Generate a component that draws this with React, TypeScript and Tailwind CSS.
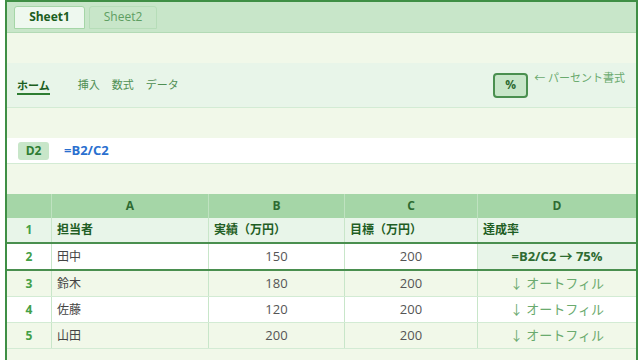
import React from "react";

const rows = [
  { n: "2", name: "田中", b: "150", c: "200", d: "=B2/C2 → 75%", active: true },
  { n: "3", name: "鈴木", b: "180", c: "200", d: "↓ オートフィル" },
  { n: "4", name: "佐藤", b: "120", c: "200", d: "↓ オートフィル" },
  { n: "5", name: "山田", b: "200", c: "200", d: "↓ オートフィル" },
];

const cols = "grid grid-cols-[45px_157px_136px_133px_1fr]";

export default function App() {
  return (
    <div
      className="w-[640px] h-[360px] overflow-hidden bg-white"
      style={{ fontFamily: '"Open Sans", "Noto Sans CJK JP", sans-serif' }}
    >
      <div className="ml-[5px] w-[633px] h-[370px] border-x-2 border-t-2 border-[#3f8f45] bg-[#f1f8e9]">
        {/* Sheet tabs */}
        <div className="h-[31px] bg-[#c8e6c9] border-b border-[#b3dab5] flex items-center gap-1 px-[7px]">
          <div className="w-[71px] h-[23px] rounded-t-[3px] bg-[#eef8ef] border border-[#a5d6a7] flex items-center justify-center text-[12px] font-bold text-[#1b5e20]">
            Sheet1
          </div>
          <div className="w-[68px] h-[23px] rounded-t-[3px] bg-[#c8e6c9] border border-[#b6ddb8] flex items-center justify-center text-[12px] text-[#5e9e62]">
            Sheet2
          </div>
        </div>

        <div className="h-[30px]" />

        {/* Ribbon */}
        <div className="h-[45px] bg-[#e8f5e9] border-b border-[#d3ebd4] flex items-center pl-[10px] pr-[11px]">
          <span className="text-[11px] font-bold text-[#1b5e20] border-b-2 border-[#2e7d32] leading-[15px] mt-[2px] mr-[28px]">
            ホーム
          </span>
          <div className="flex gap-[12px] text-[11px] text-[#4f8f53]">
            <span>挿入</span>
            <span>数式</span>
            <span>データ</span>
          </div>
          <div className="ml-auto flex items-start gap-[6px]">
            <div className="w-[35px] h-[25px] rounded-[4px] bg-[#c8e6c9] border-2 border-[#4a8f4f] flex items-center justify-center text-[12px] font-bold text-[#2e6b32]">
              %
            </div>
            <span className="text-[11px] leading-[12px] text-[#6aaa6e] -mt-[1px]">← パーセント書式</span>
          </div>
        </div>

        <div className="h-[30px]" />

        {/* Formula bar */}
        <div className="h-[26px] bg-white border-b border-[#d3ebd4] flex items-center pl-[11px] gap-[15px]">
          <div className="w-[31px] h-[18px] rounded-[3px] bg-[#c8e6c9] flex items-center justify-center text-[12px] font-bold text-[#2e7d32]">
            D2
          </div>
          <span className="text-[13px] font-bold text-[#2a6fcf]">=B2/C2</span>
        </div>

        <div className="h-[30px]" />

        {/* Grid */}
        <div className="text-[12px]">
          <div className={`${cols} h-[24px] bg-[#a5d6a7] font-bold text-[#2e6b32]`}>
            <div className="border-r border-[#bfe2c0]" />
            {["A", "B", "C", "D"].map((c) => (
              <div key={c} className="flex items-center justify-center border-r border-[#bfe2c0] last:border-r-0">
                {c}
              </div>
            ))}
          </div>

          <div className={`${cols} h-[26px] bg-[#e8f5e9] font-bold text-[#1f5e24] border-b-2 border-[#4a8f4f]`}>
            <div className="flex items-center justify-center border-r border-[#c8e6c9] text-[#43a047]">1</div>
            <div className="flex items-center pl-[5px] border-r border-[#c8e6c9]">担当者</div>
            <div className="flex items-center pl-[5px] border-r border-[#c8e6c9]">実績（万円）</div>
            <div className="flex items-center pl-[5px] border-r border-[#c8e6c9]">目標（万円）</div>
            <div className="flex items-center pl-[5px]">達成率</div>
          </div>

          {rows.map((r, i) => (
            <div
              key={r.n}
              className={`${cols} ${r.active ? "h-[27px] border-b-2 border-[#4a8f4f]" : "h-[26px] border-b border-[#d3ebd4]"} ${
                i % 2 === 1 ? "bg-[#f1f8e9]" : "bg-white"
              }`}
            >
              <div className="flex items-center justify-center border-r border-[#c8e6c9] font-bold text-[#43a047]">{r.n}</div>
              <div className="flex items-center pl-[5px] border-r border-[#c8e6c9] text-[#444]">{r.name}</div>
              <div className="flex items-center justify-center border-r border-[#c8e6c9] text-[#555] text-[13px]">{r.b}</div>
              <div className="flex items-center justify-center border-r border-[#c8e6c9] text-[#555] text-[13px]">{r.c}</div>
              {r.active ? (
                <div className="flex items-center justify-center bg-[#e8f5e9] font-bold text-[13px] text-[#2e6b32]">{r.d}</div>
              ) : (
                <div className="flex items-center justify-center text-[13px] text-[#6aaa6e]">{r.d}</div>
              )}
            </div>
          ))}
        </div>
      </div>
    </div>
  );
}
